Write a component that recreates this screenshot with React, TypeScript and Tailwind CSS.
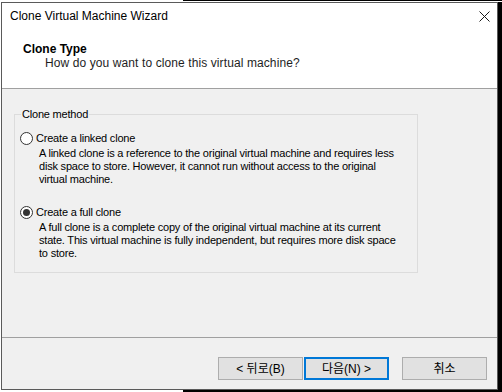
const UI_FONT = "font-['Liberation_Sans','Noto_Sans_CJK_KR',sans-serif]"

function Radio({ checked }: { checked?: boolean }) {
  return (
    <span className="flex h-[13px] w-[13px] shrink-0 items-center justify-center rounded-full border border-[#333333] bg-white">
      {checked && <span className="h-[7px] w-[7px] rounded-full bg-[#333333]" />}
    </span>
  )
}

interface OptionProps {
  label: string
  lines: string[]
  checked?: boolean
  className?: string
}

function CloneOption({ label, lines, checked, className }: OptionProps) {
  return (
    <div className={className}>
      <div className="flex h-[13px] items-center gap-[3px] pl-[5px]">
        <Radio checked={checked} />
        <span className="whitespace-nowrap">{label}</span>
      </div>
      <div className="mt-[2px] pl-[24px]">
        {lines.map(line => (
          <div key={line} className="whitespace-nowrap">
            {line}
          </div>
        ))}
      </div>
    </div>
  )
}

function WizButton({ children, primary }: { children: React.ReactNode; primary?: boolean }) {
  return (
    <button
      className={`flex h-[23px] w-[85px] items-center justify-center bg-[#e1e1e1] text-[12px] text-black ${
        primary ? 'border-2 border-[#0078d7]' : 'border border-[#adadad]'
      }`}
    >
      {children}
    </button>
  )
}

export default function App() {
  return (
    <div className={`flex h-[392px] w-[502px] flex-col overflow-hidden bg-white ${UI_FONT}`}>
      {/* desktop strip above the window */}
      <div className="flex h-[2px]">
        <div className="w-[183px]" />
        <div className="h-[1px] flex-1 bg-black" />
      </div>

      <div className="flex h-[388px]">
        <div className="ml-[1px] flex w-[497px] flex-col border border-[#5a5a5a] bg-white">
          {/* Title bar */}
          <div className="flex h-[30px] items-start justify-between pl-[8px] pr-[7px] pt-[6px]">
            <span className="text-[12px] leading-[14px] text-black">Clone Virtual Machine Wizard</span>
            <svg width="11" height="11" viewBox="0 0 11 11" className="mt-[2px]">
              <path d="M0.5 0.5 L10.5 10.5 M10.5 0.5 L0.5 10.5" stroke="#1a1a1a" strokeWidth="1" fill="none" />
            </svg>
          </div>

          {/* Header */}
          <div className="h-[55px] pl-[21px] pt-[9px]">
            <div className="text-[12px] font-bold leading-[14px] text-black">Clone Type</div>
            <div className="pl-[22px] text-[12px] leading-[14px] tracking-[0.1px] text-[#1e1e1e]">
              How do you want to clone this virtual machine?
            </div>
          </div>
          <div className="h-[1px] bg-[#a0a0a0]" />

          {/* Body */}
          <div className="h-[248px] bg-[#f0f0f0] pl-[12px] pt-[25px] text-[11px] leading-[13px] tracking-[-0.2px] text-black">
            <div className="h-[159px] w-[404px] border border-[#dcdcdc]">
              <div className="-mt-[7px] ml-[6px] w-fit bg-[#f0f0f0] px-[1px]">Clone method</div>
              <CloneOption
                className="mt-[11px]"
                label="Create a linked clone"
                lines={[
                  'A linked clone is a reference to the original virtual machine and requires less',
                  'disk space to store. However, it cannot run without access to the original',
                  'virtual machine.',
                ]}
              />
              <CloneOption
                className="mt-[20px]"
                checked
                label="Create a full clone"
                lines={[
                  'A full clone is a complete copy of the original virtual machine at its current',
                  'state. This virtual machine is fully independent, but requires more disk space',
                  'to store.',
                ]}
              />
            </div>
          </div>
          <div className="h-[1px] bg-[#a0a0a0]" />

          {/* Footer */}
          <div className="flex h-[51px] items-start justify-end bg-[#f0f0f0] pr-[10px] pt-[19px]">
            <WizButton>&lt; 뒤로(B)</WizButton>
            <div className="w-[1px]" />
            <WizButton primary>다음(N) &gt;</WizButton>
            <div className="w-[13px]" />
            <WizButton>취소</WizButton>
          </div>
        </div>
        <div className="flex-1 bg-black" />
      </div>

      {/* desktop strip below the window */}
      <div className="flex h-[2px]">
        <div className="w-[183px]" />
        <div className="flex-1 bg-black" />
      </div>
    </div>
  )
}
